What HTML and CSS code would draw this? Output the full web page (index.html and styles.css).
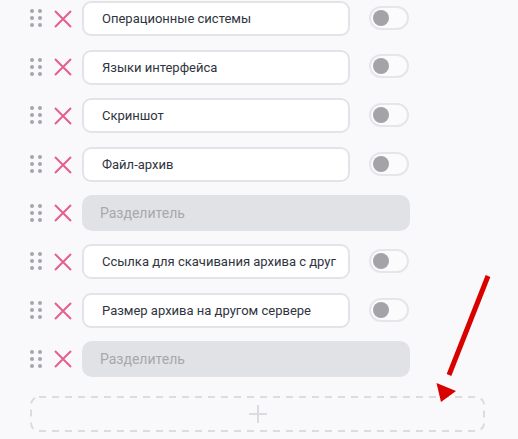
FILE: index.html
```html
<!DOCTYPE html>
<html lang="ru">
<head>
<meta charset="utf-8">
<link rel="stylesheet" href="styles.css">
</head>
<body>
<div class="list">
  <div class="row">
    <svg class="handle" width="12" height="18" viewBox="0 0 12 18"><g fill="#a6a6aa"><circle cx="2" cy="2" r="2"/><circle cx="10" cy="2" r="2"/><circle cx="2" cy="9" r="2"/><circle cx="10" cy="9" r="2"/><circle cx="2" cy="16" r="2"/><circle cx="10" cy="16" r="2"/></g></svg>
    <svg class="del" width="18" height="18" viewBox="0 0 18 18"><path d="M1 1L17 17M17 1L1 17" stroke="#e65f8e" stroke-width="2"/></svg>
    <div class="field">Операционные системы</div>
    <div class="toggle"><span class="knob"></span></div>
  </div>
  <div class="row">
    <svg class="handle" width="12" height="18" viewBox="0 0 12 18"><g fill="#a6a6aa"><circle cx="2" cy="2" r="2"/><circle cx="10" cy="2" r="2"/><circle cx="2" cy="9" r="2"/><circle cx="10" cy="9" r="2"/><circle cx="2" cy="16" r="2"/><circle cx="10" cy="16" r="2"/></g></svg>
    <svg class="del" width="18" height="18" viewBox="0 0 18 18"><path d="M1 1L17 17M17 1L1 17" stroke="#e65f8e" stroke-width="2"/></svg>
    <div class="field">Языки интерфейса</div>
    <div class="toggle"><span class="knob"></span></div>
  </div>
  <div class="row">
    <svg class="handle" width="12" height="18" viewBox="0 0 12 18"><g fill="#a6a6aa"><circle cx="2" cy="2" r="2"/><circle cx="10" cy="2" r="2"/><circle cx="2" cy="9" r="2"/><circle cx="10" cy="9" r="2"/><circle cx="2" cy="16" r="2"/><circle cx="10" cy="16" r="2"/></g></svg>
    <svg class="del" width="18" height="18" viewBox="0 0 18 18"><path d="M1 1L17 17M17 1L1 17" stroke="#e65f8e" stroke-width="2"/></svg>
    <div class="field">Скриншот</div>
    <div class="toggle"><span class="knob"></span></div>
  </div>
  <div class="row">
    <svg class="handle" width="12" height="18" viewBox="0 0 12 18"><g fill="#a6a6aa"><circle cx="2" cy="2" r="2"/><circle cx="10" cy="2" r="2"/><circle cx="2" cy="9" r="2"/><circle cx="10" cy="9" r="2"/><circle cx="2" cy="16" r="2"/><circle cx="10" cy="16" r="2"/></g></svg>
    <svg class="del" width="18" height="18" viewBox="0 0 18 18"><path d="M1 1L17 17M17 1L1 17" stroke="#e65f8e" stroke-width="2"/></svg>
    <div class="field">Файл-архив</div>
    <div class="toggle"><span class="knob"></span></div>
  </div>
  <div class="row">
    <svg class="handle" width="12" height="18" viewBox="0 0 12 18"><g fill="#a6a6aa"><circle cx="2" cy="2" r="2"/><circle cx="10" cy="2" r="2"/><circle cx="2" cy="9" r="2"/><circle cx="10" cy="9" r="2"/><circle cx="2" cy="16" r="2"/><circle cx="10" cy="16" r="2"/></g></svg>
    <svg class="del" width="18" height="18" viewBox="0 0 18 18"><path d="M1 1L17 17M17 1L1 17" stroke="#e65f8e" stroke-width="2"/></svg>
    <div class="separator">Разделитель</div>
  </div>
  <div class="row">
    <svg class="handle" width="12" height="18" viewBox="0 0 12 18"><g fill="#a6a6aa"><circle cx="2" cy="2" r="2"/><circle cx="10" cy="2" r="2"/><circle cx="2" cy="9" r="2"/><circle cx="10" cy="9" r="2"/><circle cx="2" cy="16" r="2"/><circle cx="10" cy="16" r="2"/></g></svg>
    <svg class="del" width="18" height="18" viewBox="0 0 18 18"><path d="M1 1L17 17M17 1L1 17" stroke="#e65f8e" stroke-width="2"/></svg>
    <div class="field">Ссылка для скачивания архива с друг</div>
    <div class="toggle"><span class="knob"></span></div>
  </div>
  <div class="row">
    <svg class="handle" width="12" height="18" viewBox="0 0 12 18"><g fill="#a6a6aa"><circle cx="2" cy="2" r="2"/><circle cx="10" cy="2" r="2"/><circle cx="2" cy="9" r="2"/><circle cx="10" cy="9" r="2"/><circle cx="2" cy="16" r="2"/><circle cx="10" cy="16" r="2"/></g></svg>
    <svg class="del" width="18" height="18" viewBox="0 0 18 18"><path d="M1 1L17 17M17 1L1 17" stroke="#e65f8e" stroke-width="2"/></svg>
    <div class="field">Размер архива на другом сервере</div>
    <div class="toggle"><span class="knob"></span></div>
  </div>
  <div class="row">
    <svg class="handle" width="12" height="18" viewBox="0 0 12 18"><g fill="#a6a6aa"><circle cx="2" cy="2" r="2"/><circle cx="10" cy="2" r="2"/><circle cx="2" cy="9" r="2"/><circle cx="10" cy="9" r="2"/><circle cx="2" cy="16" r="2"/><circle cx="10" cy="16" r="2"/></g></svg>
    <svg class="del" width="18" height="18" viewBox="0 0 18 18"><path d="M1 1L17 17M17 1L1 17" stroke="#e65f8e" stroke-width="2"/></svg>
    <div class="separator">Разделитель</div>
  </div>
  <div class="add">
    <svg class="add-border" width="455" height="36" viewBox="0 0 455 36"><rect x="1" y="1" width="453" height="34" rx="8" fill="none" stroke="#dcdce0" stroke-width="2" stroke-dasharray="7 6"/></svg>
    <svg class="plus" width="18" height="18" viewBox="0 0 18 18"><path d="M9 0V18M0 9H18" stroke="#dcdce0" stroke-width="2"/></svg>
  </div>
</div>
<svg class="arrow" width="518" height="439" viewBox="0 0 518 439">
  <line x1="488" y1="276" x2="449" y2="375" stroke="#d90000" stroke-width="5"/>
  <polygon points="441,402 436.5,383 456,391" fill="#d90000"/>
</svg>
</body>
</html>
```

FILE: styles.css
```css
html, body {
  margin: 0;
  padding: 0;
  background: #f9f9fb;
  font-family: Roboto, "Noto Sans", sans-serif;
  width: 518px;
  height: 439px;
  overflow: hidden;
}

.list {
  padding: 1px 0 0 30px;
  display: flex;
  flex-direction: column;
  gap: 13.7px;
}

.row {
  display: flex;
  align-items: center;
  height: 35px;
}

.handle {
  flex: none;
  margin-top: -1px;
}

.del {
  flex: none;
  margin-left: 12px;
}

.field {
  box-sizing: border-box;
  margin-left: 10px;
  width: 268px;
  height: 35px;
  border: 2px solid #e4e4e8;
  border-radius: 9px;
  background: #ffffff;
  padding-left: 18px;
  font-size: 13px;
  line-height: 31px;
  color: #2f3440;
  white-space: nowrap;
  overflow: hidden;
}

.toggle {
  box-sizing: border-box;
  margin-left: 19px;
  width: 40px;
  height: 24px;
  border: 2px solid #e6e6ea;
  border-radius: 12px;
  background: #fbfbfc;
  display: flex;
  align-items: center;
  padding-left: 2px;
  margin-top: -2px;
}

.knob {
  width: 16px;
  height: 16px;
  border-radius: 50%;
  background: #a3a3a8;
}

.separator {
  box-sizing: border-box;
  margin-left: 10px;
  width: 328px;
  height: 36px;
  border-radius: 10px;
  background: #e1e2e6;
  padding-left: 18px;
  font-size: 14px;
  line-height: 36px;
  color: #a6a8ae;
}

.add {
  position: relative;
  width: 455px;
  height: 36px;
  margin-top: 5px;
  display: flex;
  align-items: center;
  justify-content: center;
}

.add-border {
  position: absolute;
  left: 0;
  top: 0;
}

.plus {
  position: relative;
}

.arrow {
  position: absolute;
  left: 0;
  top: 0;
  pointer-events: none;
}
```
